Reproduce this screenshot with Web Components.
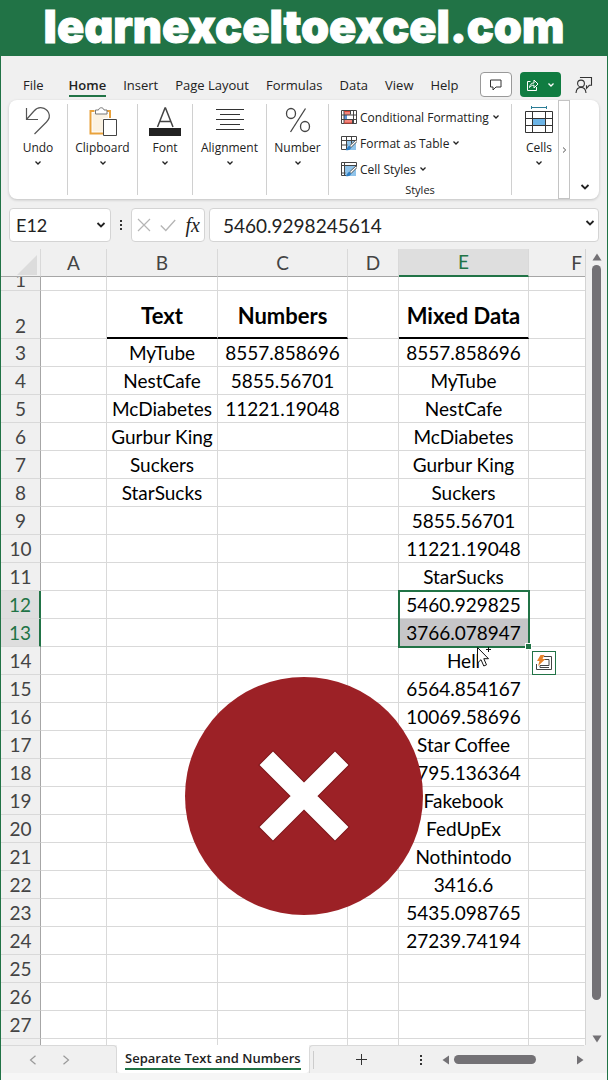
<!DOCTYPE html>
<html lang="en">
<head>
<meta charset="utf-8">
<title>Separate Text and Numbers</title>
<style>
  html, body {
    margin: 0;
    height: 100%;
  }
  body {
    font-family: "Open Sans", "Noto Sans", sans-serif;
    font-size: 12px;
    color: #222;
    overflow: hidden;
  }
</style>
</head>
<body>
<excel-app></excel-app>

<script>
const ICONS = {
  chevron: `<svg width="8" height="6" viewBox="0 0 8 6"><path d="M1.5 1.5 4 4l2.500-2.500" fill="none" stroke="currentColor" stroke-width="1.300"/></svg>`,
  chevronBig: `<svg width="10" height="8" viewBox="0 0 10 8"><path d="M1.500 2 5 5.500 8.500 2" fill="none" stroke="currentColor" stroke-width="1.800"/></svg>`,
  comment: `<svg width="14" height="14" viewBox="0 0 14 14"><path d="M1.500 2h10.500v7H7l-3 3V9H1.500z" fill="none" stroke="#333"/></svg>`,
  share: `<svg width="13" height="14" viewBox="0 0 13 14"><path d="M4.500 3.500h-3v9h9V9M3.500 9.500C4 6.500 5.500 5 8 5V2l4 4-4 4V7.200C6 7.200 4.700 8 3.500 9.500z" fill="none" stroke="#fff"/></svg>`,
  person: `<svg width="18" height="18" viewBox="0 0 18 18"><g fill="none" stroke="#333" stroke-width="1.100"><circle cx="6" cy="7.500" r="3.400"/><path d="M1 17c.3-3.600 2-5.600 5-5.600s4.700 2 5 5.600M5.500 2V1.500h11v7.800h-2.200l-2.800 3V9.300"/></g></svg>`,
  undo: `<svg width="28" height="30" viewBox="0 0 28 30"><path d="M2.500 2v11.500H14M2.500 13.500 10 5c4.500-5.500 12-3.500 14.500 1.500 1.700 3.500.5 7-2 9.500L10.500 28" fill="none" stroke="#555" stroke-width="1.200"/></svg>`,
  clipboard: `<svg width="28" height="30" viewBox="0 0 28 30"><path d="M5.500 5h-4v22.500H14M17 5h4v7" fill="none" stroke="#e9a23b" stroke-width="2"/><path d="M3.500 7h15.500v5h-5v13.500H3.500z" fill="#fbf2e2"/><path d="M6.500 8V4h3c.5-3 5-3 5.500 0h3v4z" fill="#fff" stroke="#777"/><path d="M14.500 13.500h13v16h-13z" fill="#fff" stroke="#444"/></svg>`,
  font: `<svg width="32" height="30" viewBox="0 0 32 30"><path d="M8.500 21 16 2h.500L24 21M11 15.500h10.500" fill="none" stroke="#444" stroke-width="1.500"/><path d="M0 22h32v8H0z" fill="#222"/></svg>`,
  align: `<svg width="28" height="30" viewBox="0 0 28 30"><path d="M0 3.500h28M4 8.500h20M0 13.500h28M4 18.500h20M0 23.500h28" stroke="#333" fill="none"/></svg>`,
  percent: `<svg width="28" height="30" viewBox="0 0 28 30"><g fill="none" stroke="#444" stroke-width="1.300"><ellipse cx="7" cy="7.500" rx="4.500" ry="5"/><ellipse cx="21" cy="20.500" rx="4.500" ry="5"/><path d="M21.500 2.500 6.500 26"/></g></svg>`,
  cells: `<svg width="28" height="30" viewBox="0 0 28 30"><path d="M6.500 1.500h15M6.500 0v3M21.500 0v3" stroke="#2b7d96" fill="none"/><path d="M.5 5.500h27v21H.5z" fill="#fff"/><path d="M7.500 12.500h13v7h-13z" fill="#6cb4e6"/><path d="M.5 5.500h27v21H.5zM.5 12.500h27M.5 19.500h27M7.500 5.500v21M20.500 5.500v21" fill="none" stroke="#333"/></svg>`,
  conditional: `<svg width="16" height="15" viewBox="0 0 16 15"><path d="M.5.500h15v13H.5z" fill="#fff"/><path d="M3 1h6v4H3zM3 10h8v4H3z" fill="#f4857c"/><path d="M3 5h3v5H3z" fill="#5b8fd6"/><path d="M.5.500h15v13H.5zM3 .5v13M9.500.500v4M11.500 9v5M.5 5h15M.5 9.500h15M12.500.500v13" fill="none" stroke="#444"/><path d="M3 1.500h6M3 13h8" stroke="#d84437"/></svg>`,
  tableFormat: `<svg width="16" height="15" viewBox="0 0 16 15"><path d="M5 5h10v9H5z" fill="#8fc3ea"/><path d="M15.500 4V.500H.5v13H5M.5 4.500h15M.5 9h6M5.500.500v13M10.500.500v7" fill="none" stroke="#444"/><path d="M15.500 3.500 8.500 10l1.500 1.500 6-6z" fill="#fff" stroke="#333" stroke-width=".8"/><path d="M8.500 10c-2 0-2 2.500-4 4 3 .8 5.500 0 5.500-2.500z" fill="#2f7fc4"/></svg>`,
  cellStyles: `<svg width="16" height="15" viewBox="0 0 16 15"><path d="M3 4h12v10H3z" fill="#8fc3ea"/><path d="M15.500 5V.500H.5v13H5M.5 3.500h15M3.500.500v13M.5 11h4" fill="none" stroke="#444"/><path d="M15.500 3.500 8.500 10l1.500 1.500 6-6z" fill="#fff" stroke="#333" stroke-width=".8"/><path d="M8.500 10c-2 0-2 2.500-4 4 3 .8 5.500 0 5.500-2.500z" fill="#2f7fc4"/></svg>`,
  cancel: `<svg width="14" height="14" viewBox="0 0 14 14"><path d="m1 1 12 12M13 1 1 13" stroke="#b5b5b5" fill="none" stroke-width="1.200"/></svg>`,
  accept: `<svg width="16" height="14" viewBox="0 0 16 14"><path d="m.8 7.500 5 5L15.200 2" stroke="#b5b5b5" fill="none" stroke-width="1.300"/></svg>`,
  dots: `<svg width="4" height="12" viewBox="0 0 4 12"><path d="M1 1h2v2H1zM1 5h2v2H1zM1 9h2v2H1z" fill="#333"/></svg>`,
  prev: `<svg width="8" height="10" viewBox="0 0 8 10"><path d="M6.500.700 1.500 5l5 4.300" fill="none" stroke="#999" stroke-width="1.200"/></svg>`,
  next: `<svg width="8" height="10" viewBox="0 0 8 10"><path d="M1.500.700 6.500 5l-5 4.300" fill="none" stroke="#999" stroke-width="1.200"/></svg>`,
  more: `<svg width="5" height="6" viewBox="0 0 5 6"><path d="M1 .5 3.700 3 1 5.500" fill="none" stroke="#555"/></svg>`,
  plus: `<svg width="11" height="11" viewBox="0 0 11 11"><path d="M5.500 0v11M0 5.500h11" stroke="#333" fill="none"/></svg>`,
  up: `<svg width="10" height="8" viewBox="0 0 10 8"><path d="M5 .5 9.500 7.500H.5z" fill="#737175"/></svg>`,
  down: `<svg width="10" height="8" viewBox="0 0 10 8"><path d="M5 7.500 9.500.500H.5z" fill="#737175"/></svg>`,
  left: `<svg width="8" height="10" viewBox="0 0 8 10"><path d="M.5 5 7 .5v9z" fill="#737175"/></svg>`,
  right: `<svg width="8" height="10" viewBox="0 0 8 10"><path d="M7.500 5 1 .5v9z" fill="#737175"/></svg>`,
  analysis: `<svg width="18" height="16" viewBox="0 0 18 16"><path d="M9 1.500h7.500v13H1.500V9M8 4.500h6v6H5v2h9" fill="none" stroke="#444"/><path d="M5.500 0h4L7.500 4h3L3 11l1.500-5H2z" fill="#e8832a"/></svg>`,
  cursor: `<svg width="16" height="24" viewBox="0 0 16 24"><path d="M1.500 2.500v15.500l3.500-3.300 2.800 6.300 2.700-1.200L7.800 13.700h4.700z" fill="#fff" stroke="#111"/><path d="M12.500 2v5M10 4.500h5" stroke="#111" fill="none"/></svg>`
};

const BUTTON_RESET = `
  button {
    font: inherit;
    color: inherit;
    background: none;
    border: 0;
    margin: 0;
    padding: 0;
    display: flex;
    align-items: center;
    justify-content: center;
  }
  svg { display: block; flex: none; }
`;

//
// BANNER
//
const bannerTemplate = document.createElement("template");
bannerTemplate.innerHTML = `
  <style>
    :host {
      display: block;
      background: #217346;
      color: #fff;
    }
    h1 {
      margin: 0;
      font: 900 45px/54px Inter, sans-serif;
      font-feature-settings: "cv11";
      text-align: center;
      white-space: nowrap;
      padding-bottom: 2px;
      -webkit-text-stroke: 1px #fff;
    }
  </style>
  <h1><slot></slot></h1>
`;

customElements.define(
  "site-banner",
  class extends HTMLElement {
    connectedCallback() {
      this.attachShadow({ mode: "open" });
      this.shadowRoot.appendChild(bannerTemplate.content.cloneNode(true));
    }
  }
);

//
// MENU TABS
//
const menuTemplate = document.createElement("template");
menuTemplate.innerHTML = `
  <style>
    ${BUTTON_RESET}
    :host {
      display: flex;
      align-items: flex-end;
      justify-content: space-between;
      padding: 16px 14px 3px 22px;
    }
    nav {
      display: flex;
      gap: 17px;
      font-size: 13px;
      line-height: 20px;
    }
    nav button {
      white-space: nowrap;
      border-bottom: 2px solid transparent;
    }
    nav button:first-child { margin-right: 8px; }
    nav .active {
      font-weight: 600;
      border-color: #217346;
    }
    .actions {
      display: flex;
      align-items: center;
      gap: 8px;
    }
    .actions button { height: 25px; }
    .comment {
      width: 32px;
      box-sizing: border-box;
      background: #fff;
      border: 1px solid #999;
      border-radius: 4px;
    }
    .share {
      width: 41px;
      gap: 8px;
      color: #fff;
      background: #107c41;
      border-radius: 4px;
    }
    .person { padding-left: 6px; }
  </style>
  <nav></nav>
  <div class="actions">
    <button class="comment" aria-label="Comments">${ICONS.comment}</button>
    <button class="share" aria-label="Share">${ICONS.share}${ICONS.chevron}</button>
    <button class="person" aria-label="Account">${ICONS.person}</button>
  </div>
`;

customElements.define(
  "menu-tabs",
  class extends HTMLElement {
    connectedCallback() {
      this.attachShadow({ mode: "open" });
      this.shadowRoot.appendChild(menuTemplate.content.cloneNode(true));

      const nav = this.shadowRoot.querySelector("nav");
      this.getAttribute("items").split(",").forEach((name) => {
        const button = document.createElement("button");
        button.textContent = name;
        name === this.getAttribute("active") && button.classList.add("active");
        nav.appendChild(button);
      });
    }
  }
);

//
// RIBBON
//
const groupTemplate = document.createElement("template");
groupTemplate.innerHTML = `
  <style>
    ${BUTTON_RESET}
    :host {
      display: block;
      box-sizing: border-box;
      flex: 0 0 auto;
      margin: 4px 0;
      border-right: 1px solid #d0d0d0;
    }
    button {
      width: 100%;
      flex-direction: column;
      padding-top: 2px;
    }
    span {
      line-height: 20px;
      margin: 2px 0;
    }
  </style>
  <button><i></i><span><slot></slot></span>${ICONS.chevron}</button>
`;

customElements.define(
  "ribbon-group",
  class extends HTMLElement {
    connectedCallback() {
      this.attachShadow({ mode: "open" });
      this.shadowRoot.appendChild(groupTemplate.content.cloneNode(true));
      this.shadowRoot.querySelector("i").innerHTML = ICONS[this.getAttribute("icon")];
    }
  }
);

const styleItemTemplate = document.createElement("template");
styleItemTemplate.innerHTML = `
  <style>
    ${BUTTON_RESET}
    :host { display: block; }
    button {
      gap: 3px;
      height: 26px;
      white-space: nowrap;
    }
  </style>
  <button><i></i><slot></slot>${ICONS.chevron}</button>
`;

customElements.define(
  "style-item",
  class extends HTMLElement {
    connectedCallback() {
      this.attachShadow({ mode: "open" });
      this.shadowRoot.appendChild(styleItemTemplate.content.cloneNode(true));
      this.shadowRoot.querySelector("i").innerHTML = ICONS[this.getAttribute("icon")];
    }
  }
);

const ribbonTemplate = document.createElement("template");
ribbonTemplate.innerHTML = `
  <style>
    ${BUTTON_RESET}
    :host {
      display: flex;
      height: 99px;
      margin: 0 8px;
      background: #fff;
      border-radius: 8px;
      box-shadow: 0 1px 3px #0003;
    }
    .undo { width: 59px; }
    .clipboard { width: 70px; }
    .font { width: 55px; }
    .alignment { width: 74px; }
    .number { width: 62px; }
    .cells {
      width: 46px;
      padding-left: 8px;
      border: 0;
    }
    .styles {
      flex: 1;
      margin: 4px 0;
      padding-left: 12px;
      border-right: 1px solid #d0d0d0;
    }
    .styles p {
      margin: 0;
      font-size: 11px;
      line-height: 16px;
      text-align: center;
      padding-right: 12px;
    }
    .more {
      width: 12px;
      box-sizing: border-box;
      border: 1px solid #c4c4c4;
    }
    .collapse {
      width: 29px;
      align-items: flex-end;
      padding-bottom: 8px;
    }
  </style>
  <ribbon-group class="undo" icon="undo">Undo</ribbon-group>
  <ribbon-group class="clipboard" icon="clipboard">Clipboard</ribbon-group>
  <ribbon-group class="font" icon="font">Font</ribbon-group>
  <ribbon-group class="alignment" icon="align">Alignment</ribbon-group>
  <ribbon-group class="number" icon="percent">Number</ribbon-group>
  <div class="styles">
    <style-item icon="conditional">Conditional Formatting</style-item>
    <style-item icon="tableFormat">Format as Table</style-item>
    <style-item icon="cellStyles">Cell Styles</style-item>
    <p>Styles</p>
  </div>
  <ribbon-group class="cells" icon="cells">Cells</ribbon-group>
  <button class="more" aria-label="More commands">${ICONS.more}</button>
  <button class="collapse" aria-label="Ribbon display options">${ICONS.chevronBig}</button>
`;

customElements.define(
  "excel-ribbon",
  class extends HTMLElement {
    connectedCallback() {
      this.attachShadow({ mode: "open" });
      this.shadowRoot.appendChild(ribbonTemplate.content.cloneNode(true));
    }
  }
);

//
// FORMULA BAR
//
const formulaTemplate = document.createElement("template");
formulaTemplate.innerHTML = `
  <style>
    ${BUTTON_RESET}
    :host {
      display: flex;
      align-items: center;
      margin: 9px 8px 7px;
      font-family: Lato, "Open Sans", sans-serif;
      font-size: 19px;
    }
    .box {
      display: flex;
      align-items: center;
      box-sizing: border-box;
      height: 34px;
      background: #fff;
      border: 1px solid #d4d4d4;
      border-radius: 4px;
    }
    input {
      flex: 1;
      min-width: 0;
      padding: 0;
      border: 0;
      outline: 0;
      background: none;
      font: inherit;
      color: inherit;
    }
    .name {
      width: 102px;
      padding: 0 4px 0 6px;
      font-size: 18px;
    }
    .dots { width: 20px; }
    .actions {
      width: 74px;
      justify-content: space-between;
      padding: 0 4px 0 5px;
    }
    .fx {
      font: italic 20px/24px "Liberation Serif", serif;
    }
    .formula {
      flex: 1;
      margin-left: 4px;
      padding: 0 3px 4px 13px;
    }
    .formula input { padding-top: 4px; }
  </style>
  <div class="box name">
    <input aria-label="Name box" value="E12">
    <button aria-label="Open names">${ICONS.chevronBig}</button>
  </div>
  <button class="dots" aria-label="Resize">${ICONS.dots}</button>
  <div class="box actions">
    <button aria-label="Cancel">${ICONS.cancel}</button>
    <button aria-label="Enter">${ICONS.accept}</button>
    <button class="fx" aria-label="Insert function">fx</button>
  </div>
  <div class="box formula">
    <input aria-label="Formula bar" value="5460.9298245614">
    <button aria-label="Expand formula bar">${ICONS.chevronBig}</button>
  </div>
`;

customElements.define(
  "formula-bar",
  class extends HTMLElement {
    connectedCallback() {
      this.attachShadow({ mode: "open" });
      this.shadowRoot.appendChild(formulaTemplate.content.cloneNode(true));
    }
  }
);

//
// SHEET
//
const LAST_ROW = 27;
const DATA = {
  B: ["Text", "MyTube", "NestCafe", "McDiabetes", "Gurbur King", "Suckers", "StarSucks"],
  C: ["Numbers", "8557.858696", "5855.56701", "11221.19048"],
  E: [
    "Mixed Data", "8557.858696", "MyTube", "NestCafe", "McDiabetes", "Gurbur King",
    "Suckers", "5855.56701", "11221.19048", "StarSucks", "5460.929825", "3766.078947",
    "Hell", "6564.854167", "10069.58696", "Star Coffee", "8795.136364", "Fakebook",
    "FedUpEx", "Nothintodo", "3416.6", "5435.098765", "27239.74194"
  ]
};

const sheetTemplate = document.createElement("template");
sheetTemplate.innerHTML = `
  <style>
    ${BUTTON_RESET}
    :host {
      display: flex;
      position: relative;
      min-height: 0;
      font-family: Lato, "Open Sans", sans-serif;
      font-size: 19px;
    }
    .grid {
      flex: 1;
      min-width: 0;
      overflow: hidden;
      border-right: 1px solid #d4d4d4;
    }
    table {
      table-layout: fixed;
      width: max(100%, 624px);
      border-collapse: separate;
      border-spacing: 0;
      background: #fff;
      color: #000;
    }
    th, td {
      box-sizing: border-box;
      height: 28px;
      padding: 0;
      border-right: 1px solid #d9d9d9;
      border-bottom: 1px solid #d9d9d9;
      text-align: center;
      line-height: 24px;
      white-space: nowrap;
    }
    thead th, tbody th {
      font-weight: 400;
      color: #444;
      background: #f0f0f0;
    }
    thead th { border-bottom-color: #a6a6a6; }
    tbody th { border-right-color: #a6a6a6; }
    thead svg { margin: 4px 3px 0 auto; }
    thead .selected,
    tbody .selected {
      color: #217346;
      background: #dedede;
    }
    thead .selected { border-bottom: 2px solid #217346; }
    tbody .selected { border-right: 2px solid #217346; }
    .first th, .first td { height: 14px; }
    .first div {
      display: flex;
      align-items: flex-end;
      justify-content: center;
      height: 13px;
      overflow: hidden;
      line-height: 20px;
    }
    .heading th, .heading td { height: 48px; }
    .heading th { vertical-align: bottom; }
    .heading td {
      padding-top: 4px;
      font-size: 22px;
      font-weight: 700;
    }
    .heading .filled { border-bottom: 2px solid #000; }
    td.anchor { position: relative; }
    td.shaded { background: #c6c6c8; }
    .range {
      position: absolute;
      top: -1px;
      left: -1px;
      right: -2px;
      height: 54px;
      border: 2px solid #217346;
      z-index: 1;
    }
    .range::after {
      content: "";
      position: absolute;
      right: -4px;
      bottom: -4px;
      width: 5px;
      height: 5px;
      background: #217346;
      border: 1px solid #fff;
    }
    .range button {
      position: absolute;
      top: 59px;
      left: calc(100% + 4px);
      width: 24px;
      height: 24px;
      background: #fff;
      border: 1px solid #217346;
    }
    .range > svg {
      position: absolute;
      top: 53px;
      left: 76px;
    }
    .scroll {
      display: flex;
      flex-direction: column;
      align-items: center;
      gap: 4px;
      box-sizing: border-box;
      width: 21px;
      padding: 4px 0 2px;
      background: #f0f0f0;
    }
    .thumb {
      width: 9px;
      flex: 1;
      margin-bottom: 31px;
      border-radius: 5px;
      background: #737175;
    }
    ::slotted(*) {
      position: absolute;
      top: 428px;
      left: calc(50% - 119px);
      z-index: 2;
    }
  </style>
  <div class="grid">
    <table>
      <colgroup>
        <col style="width:40px"><col style="width:66px"><col style="width:111px">
        <col style="width:130px"><col style="width:51px"><col style="width:130px"><col>
      </colgroup>
      <thead>
        <tr>
          <th aria-label="Select all"><svg width="20" height="20" viewBox="0 0 20 20"><path d="M20 0v20H0z" fill="#dcdcdc"/></svg></th>
          <th>A</th><th>B</th><th>C</th><th>D</th><th class="selected">E</th><th>F</th>
        </tr>
      </thead>
      <tbody></tbody>
    </table>
  </div>
  <div class="scroll">${ICONS.up}<div class="thumb"></div>${ICONS.down}</div>
  <slot></slot>
`;

customElements.define(
  "work-sheet",
  class extends HTMLElement {
    connectedCallback() {
      this.attachShadow({ mode: "open" });
      this.shadowRoot.appendChild(sheetTemplate.content.cloneNode(true));

      const body = this.shadowRoot.querySelector("tbody");
      for (let row = 1; row <= LAST_ROW; row++) {
        body.appendChild(this.createRow(row));
      }
      // blank row under the last one
      body.appendChild(this.createRow(""));
    }

    createRow(row) {
      const tr = document.createElement("tr");
      const th = document.createElement("th");
      th.innerHTML = row === 1 ? `<div>${row}</div>` : row;
      tr.appendChild(th);
      row === 1 && tr.classList.add("first");
      row === 2 && tr.classList.add("heading");
      (row === 12 || row === 13) && th.classList.add("selected");

      ["A", "B", "C", "D", "E", "F"].forEach((column) => {
        const td = document.createElement("td");
        const value = (DATA[column] || [])[row - 2];
        if (value) {
          td.textContent = value;
          td.classList.add("filled");
        }
        if (column === "E" && row === 12) {
          td.classList.add("anchor");
          td.insertAdjacentHTML(
            "beforeend",
            `<div class="range"><button aria-label="Quick analysis">${ICONS.analysis}</button>${ICONS.cursor}</div>`
          );
        }
        column === "E" && row === 13 && td.classList.add("shaded");
        tr.appendChild(td);
      });
      return tr;
    }
  }
);

//
// WRONG MARK
//
customElements.define(
  "wrong-mark",
  class extends HTMLElement {
    connectedCallback() {
      this.attachShadow({ mode: "open" });
      this.shadowRoot.innerHTML = `
        <style>
          :host { display: block; width: 238px; height: 238px; }
          svg { display: block; }
        </style>
        <svg viewBox="0 0 238 238">
          <circle cx="119" cy="119" r="119" fill="#9c2126"/>
          <path d="m88 88 62 62M150 88l-62 62" stroke="#7c1418" stroke-width="21" stroke-linecap="square"/>
          <path d="m88 88 62 62M150 88l-62 62" stroke="#fff" stroke-width="19" stroke-linecap="square"/>
        </svg>
      `;
    }
  }
);

//
// SHEET TABS
//
const footerTemplate = document.createElement("template");
footerTemplate.innerHTML = `
  <style>
    ${BUTTON_RESET}
    :host {
      display: flex;
      height: 28px;
      padding-right: 23px;
      background: #f0f0f0;
      border-bottom: 7px solid #f6f6f6;
    }
    .nav {
      display: flex;
      align-items: center;
      justify-content: center;
      gap: 25px;
      flex: 0 0 116px;
      box-sizing: border-box;
      padding-right: 18px;
      border: solid #d9d9d9;
      border-width: 1px 1px 0 0;
      border-radius: 0 4px 0 0;
    }
    .tab {
      padding: 0 8px;
      background: #fff;
      border-radius: 0 0 4px 4px;
    }
    .tab span {
      font-size: 13px;
      font-weight: 600;
      line-height: 20px;
      white-space: nowrap;
      border-bottom: 2px solid #217346;
    }
    .rest {
      display: flex;
      align-items: center;
      flex: 1;
      border-top: 1px solid #d9d9d9;
      border-left: 1px solid #d9d9d9;
      border-radius: 4px 0 0 0;
    }
    .add {
      padding-left: 42px;
      border-left: 1px solid #ccc;
      margin-left: 3px;
      height: 18px;
    }
    .dots { margin: 0 19px 0 auto; }
    .scroll {
      display: flex;
      align-items: center;
      gap: 4px;
    }
    .track { width: 118px; }
    .thumb {
      width: 82px;
      height: 9px;
      border-radius: 5px;
      background: #737175;
    }
  </style>
  <div class="nav">
    <button aria-label="Previous sheet">${ICONS.prev}</button>
    <button aria-label="Next sheet">${ICONS.next}</button>
  </div>
  <button class="tab"><span><slot></slot></span></button>
  <div class="rest">
    <button class="add" aria-label="New sheet">${ICONS.plus}</button>
    <button class="dots" aria-label="Sheet options">${ICONS.dots}</button>
    <div class="scroll">${ICONS.left}<div class="track"><div class="thumb"></div></div>${ICONS.right}</div>
  </div>
`;

customElements.define(
  "sheet-tabs",
  class extends HTMLElement {
    connectedCallback() {
      this.attachShadow({ mode: "open" });
      this.shadowRoot.appendChild(footerTemplate.content.cloneNode(true));
    }
  }
);

//
// APP
//
const appTemplate = document.createElement("template");
appTemplate.innerHTML = `
  <style>
    :host {
      display: flex;
      flex-direction: column;
      height: 100vh;
      background: #f0f0f0;
    }
    main {
      flex: 1;
      min-height: 0;
      display: flex;
      flex-direction: column;
      border: solid #217346;
      border-width: 0 1px;
    }
    work-sheet { flex: 1; }
  </style>
  <site-banner>learnexceltoexcel.com</site-banner>
  <main>
    <menu-tabs items="File,Home,Insert,Page Layout,Formulas,Data,View,Help" active="Home"></menu-tabs>
    <excel-ribbon></excel-ribbon>
    <formula-bar></formula-bar>
    <work-sheet><wrong-mark></wrong-mark></work-sheet>
    <sheet-tabs>Separate Text and Numbers</sheet-tabs>
  </main>
`;

customElements.define(
  "excel-app",
  class extends HTMLElement {
    connectedCallback() {
      this.attachShadow({ mode: "open" });
      this.shadowRoot.appendChild(appTemplate.content.cloneNode(true));
    }
  }
);
</script>
</body>
</html>
